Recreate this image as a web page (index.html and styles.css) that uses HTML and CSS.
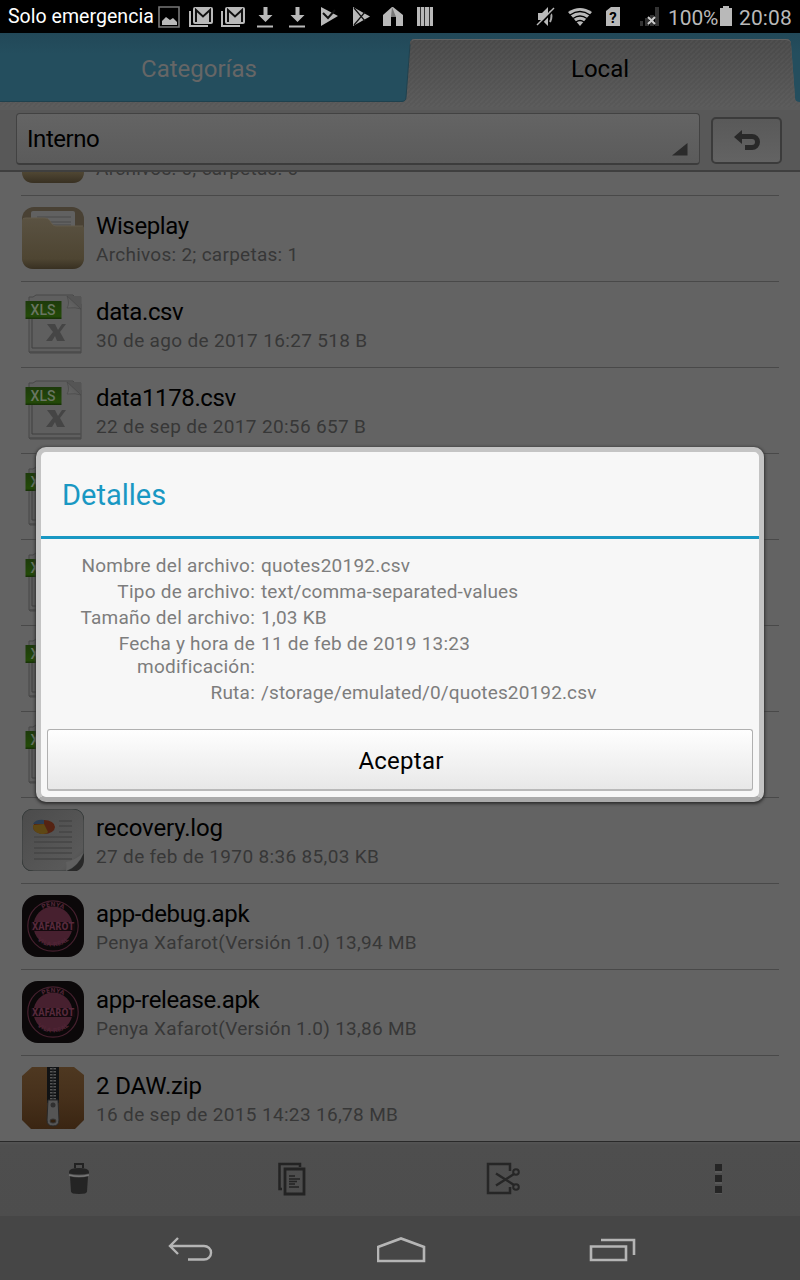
FILE: index.html
```
<!DOCTYPE html>
<html lang="es">
<head>
<meta charset="utf-8">
<title>Detalles</title>
<link rel="stylesheet" href="styles.css">
</head>
<body>
<svg class="defs" aria-hidden="true">
  <defs>
    <linearGradient id="gFolder" x1="0" y1="0" x2="0" y2="1"><stop offset="0" stop-color="#5a5242"/><stop offset=".8" stop-color="#4e4532"/><stop offset="1" stop-color="#383022"/></linearGradient>
    <linearGradient id="gGreen" x1="0" y1="0" x2="0" y2="1"><stop offset="0" stop-color="#1d3a0b"/><stop offset=".85" stop-color="#234a08"/><stop offset="1" stop-color="#152e06"/></linearGradient>
    <linearGradient id="gPage" x1="0" y1="0" x2="1" y2="1"><stop offset="0" stop-color="#4b4b4b"/><stop offset=".8" stop-color="#595959"/><stop offset="1" stop-color="#474747"/></linearGradient>
    <linearGradient id="gZip" x1="0" y1="0" x2="0" y2="1"><stop offset="0" stop-color="#4e3821"/><stop offset=".5" stop-color="#46301b"/><stop offset="1" stop-color="#3a2512"/></linearGradient>
    <linearGradient id="gFold" x1="0" y1="1" x2="1" y2="0"><stop offset="0" stop-color="#666"/><stop offset=".5" stop-color="#5c5c5c"/><stop offset=".51" stop-color="#484848"/><stop offset="1" stop-color="#606060"/></linearGradient>
    <path id="arcT" d="M15 19A20.500 20.500 0 0 1 47 19" fill="none"/>
    <path id="arcB" d="M12 41A22.500 22.500 0 0 0 50 41" fill="none"/>
  </defs>
  <symbol id="folder" viewBox="0 0 62 62">
    <rect width="62" height="62" rx="12" fill="#494134"/>
    <rect x="9" y="4" width="44" height="30" rx="2" fill="#616161"/>
    <path d="M15 10h34M15 15h34M30 18h19" stroke="#515151" stroke-width="1.5"/>
    <path d="M0 14q0-3 3-3h20q3 0 5 3l2 3q2 2 4 2h25q3 0 3 2v29q0 12-12 12H12Q0 62 0 50z" fill="url(#gFolder)"/>
    <path d="M1 12q1-1 3-1h19q3 0 5 3l2 3q2 2 4 2h27" fill="none" stroke="#625a4b"/>
  </symbol>
  <symbol id="xls" viewBox="0 0 62 62">
    <path d="M7 59V4h4l3-2h37l8 9v49H8z" fill="#5f5f5f" stroke="#484848"/>
    <path d="M10 9v46h49" fill="none" stroke="#404040"/>
    <path d="M7 59h52" stroke="#4a4a4a" stroke-width="1.5"/>
    <path d="M59 4v54" stroke="#545454"/>
    <path d="M45 3h14v13z" fill="#555"/>
    <path d="M45 3q3 8 0 12 9-1 14 1z" fill="url(#gFold)" stroke="#474747" stroke-width=".7"/>
    <path d="M25 31h8l3 6 4-6h4l-6 8 5 9h-8l-2-5-3 5h-6l7-9z" fill="#454545"/>
    <rect x="3.500" y="8" width="36" height="18" fill="url(#gGreen)"/>
  </symbol>
  <symbol id="log" viewBox="0 0 62 62">
    <rect y="1" width="62" height="62" rx="12" fill="#292929"/>
    <path d="M12 0h38q12 0 12 12v31Q56 58 44 62H12Q0 62 0 50V12Q0 0 12 0z" fill="url(#gPage)" stroke="#383d3c"/>
    <path d="M62 43Q56 58 44 62q1-5 0-9 10-2 18-10z" fill="#606060"/>
    <path d="M37 12h13M37 17h13M37 23h13M12 28h38M12 33h38M12 39h38M12 44h38M12 50h38" stroke="#454645" stroke-width="1.3"/>
    <ellipse cx="22" cy="18" rx="11" ry="7" fill="#552313"/>
    <path d="M22 15l-11 1q-1 7 8 9 6 0 7-2z" fill="#5e4714"/><path d="M11 15q3-5 11-4v4z" fill="#2b3c52"/>
  </symbol>
  <symbol id="apk" viewBox="0 0 62 62">
    <rect width="62" height="62" rx="16" fill="#0b0809"/>
    <circle cx="31" cy="31" r="25.200" fill="none" stroke="#45202e" stroke-width="1.200"/>
    <circle cx="31" cy="31" r="19.500" fill="#47202f"/>
    <rect x="9" y="27" width="44" height="9" fill="#14090e"/>
  </symbol>
  <symbol id="zip" viewBox="0 0 62 62">
    <path d="M10 0h42l10 8v45l-9 9H9l-9-9V9z" fill="url(#gZip)"/>
    <rect x="25" y="0" width="12" height="36" fill="#101214"/>
    <path d="M31 1v34" stroke="#555" stroke-width="6" stroke-dasharray="1.5 1.5"/>
    <path d="M31 0v35" stroke="#202224"/>
    <path d="M26 33h10l1 20q0 6-6 6t-6-6z" fill="#555" stroke="#292929"/>
    <circle cx="31" cy="38" r="2.5" fill="#303030"/><ellipse cx="31" cy="54" rx="3" ry="2" fill="#31200f" stroke="#353535"/>
  </symbol>
</svg>

<div class="screen">
  <header class="status">
    <span class="carrier">Solo emergencia</span>
    <svg class="status-left" width="280" height="33" viewBox="158 0 280 33" fill="#b9b9b9">
      <path d="M159 7h20v20h-20z" fill="none" stroke="#777" stroke-width="1.6"/><path d="M162 25v-4l4-4 4 3 3-2 4 4v3z"/>
      <g id="mail"><path d="M190 11v15h18" fill="none" stroke="#b9b9b9" stroke-width="2"/><rect x="193" y="7" width="20" height="17" rx="2"/><path d="M196 22V10l7 6.500 7-6.500V22" fill="none" stroke="#111" stroke-width="2"/></g>
      <use href="#mail" x="32"/>
      <g id="down"><path d="M263.500 7h4v8h5l-7 7-7-7h5zM257 25.500h16v2h-16z"/></g>
      <use href="#down" x="32"/>
      <path d="M321 7l17 9-17 10z"/><path d="M323 13l5 5 7-8" fill="none" stroke="#111" stroke-width="2"/>
      <path d="M353 7l17 9.500L353 26z"/><path d="M354 8l11 13M354 25l11-13" stroke="#111" stroke-width="1.200"/>
      <path d="M383 15l9-8h1l10 8v11h-7v-9h-5v9h-8z"/><path d="M392 7l-1 10 5 0z" fill="#777"/>
      <path d="M417 7h16v19h-16z"/><path d="M420.500 7v19M424.500 7v19M429.500 7v19" stroke="#333" stroke-width="1"/>
    </svg>
    <svg class="status-right" width="145" height="33" viewBox="525 0 145 33" fill="#b9b9b9">
      <path d="M538 13h4l6-6v19l-6-6h-4z"/><path d="M550 11q3 5 0 11" fill="none" stroke="#aaa" stroke-width="2"/><path d="M538 26.500l17-18" stroke="#000" stroke-width="2"/><path d="M537 25l17-17" stroke="#b9b9b9" stroke-width="1.500"/>
      <path d="M568 12q12-8 24 0l-12 14z"/><path d="M570 15q10-7 20 0M573 18.500q7-5 14 0M576 22q4-3 8 0" fill="none" stroke="#000" stroke-width="1.500"/>
      <path d="M606 11l5-4h9v19h-14z"/><text class="sim" x="613" y="22.500" text-anchor="middle">?</text>
      <path d="M640 21h3v5h-3zM645 18h4v8h-4zM650 15h4v11h-4zM655 7h4v19h-4z" fill="#333"/><path d="M648 17l7 7M655 17l-7 7" stroke="#ccc" stroke-width="2"/>
    </svg>
    <span class="percent">100%</span>
    <svg class="battery" width="12" height="20" viewBox="0 0 12 20"><path d="M3 0h6v2h3v18H0V2h3z" fill="#b9b9b9"/></svg>
    <span class="clock">20:08</span>
  </header>

  <nav class="tabs">
    <svg class="tab-shape" width="800" height="77" viewBox="0 0 800 77">
      <defs>
        <linearGradient id="gTab" gradientUnits="userSpaceOnUse" x1="0" y1="0" x2="0" y2="74"><stop offset="0" stop-color="#484848"/><stop offset="1" stop-color="#595959"/></linearGradient>
        <pattern id="hatch" width="5" height="5" patternUnits="userSpaceOnUse"><path d="M-1 6L6-1" stroke="#777" stroke-opacity=".14" stroke-width="1.500"/></pattern>
        <linearGradient id="gTeal" x1="0" y1="0" x2="0" y2="1"><stop offset="0" stop-color="#224858"/><stop offset=".3" stop-color="#244e5e"/><stop offset="1" stop-color="#244e5e"/></linearGradient>
      </defs>
      <rect width="800" height="77" fill="#5b5b5b"/>
      <path d="M0 0h800v69h-2q-3 0-3-4L791 11q0-5-5-5H415q-5 0-5 5l-4 54q0 4-5 4H0z" fill="url(#gTeal)"/>
      <path id="tabPath" d="M0 74v-5h401q5 0 5-4l4-54q0-5 5-5h371q5 0 5 5l4 54q0 4 5 4v5z" fill="url(#gTab)"/>
      <path d="M0 74v-5h401q5 0 5-4l4-54q0-5 5-5h371q5 0 5 5l4 54q0 4 5 4v5z" fill="url(#hatch)"/>
      <path d="M412 7.500q1-1 3-1h371q3 0 4 2" fill="none" stroke="#636363"/>
      <path d="M0 68.500h401q5 0 5-4l4-53" fill="none" stroke="#1f414e"/>
    </svg>
    <span class="tab muted">Categorías</span>
    <span class="tab">Local</span>
  </nav>

  <div class="path-bar">
    <div class="spinner"><span>Interno</span><svg width="16" height="13" viewBox="0 0 16 13"><path d="M15.500 0v12.500H0z" fill="#2b2b2b"/></svg></div>
    <div class="up"><svg width="28" height="22" viewBox="0 0 28 22"><path d="M8 0v4h10a8 8 0 0 1 0 16h-7v-5h7a3 3 0 0 0 0-6H8v5L0 7z" fill="#292929"/></svg></div>
  </div>

  <main class="list">
    <div class="row"><svg class="icon"><use href="#folder"/></svg><div><div class="name">Video</div><div class="meta">Archivos: 0; carpetas: 0</div></div></div>
    <div class="row"><svg class="icon"><use href="#folder"/></svg><div><div class="name">Wiseplay</div><div class="meta">Archivos: 2; carpetas: 1</div></div></div>
    <div class="row"><svg class="icon"><use href="#xls"/><text class="xls-label" x="21" y="21.500" text-anchor="middle">XLS</text></svg><div><div class="name">data.csv</div><div class="meta date">30 de ago de 2017 16:27 518 B</div></div></div>
    <div class="row"><svg class="icon"><use href="#xls"/><text class="xls-label" x="21" y="21.500" text-anchor="middle">XLS</text></svg><div><div class="name">data1178.csv</div><div class="meta date">22 de sep de 2017 20:56 657 B</div></div></div>
    <div class="row"><svg class="icon"><use href="#xls"/><text class="xls-label" x="21" y="21.500" text-anchor="middle">XLS</text></svg></div>
    <div class="row"><svg class="icon"><use href="#xls"/><text class="xls-label" x="21" y="21.500" text-anchor="middle">XLS</text></svg></div>
    <div class="row"><svg class="icon"><use href="#xls"/><text class="xls-label" x="21" y="21.500" text-anchor="middle">XLS</text></svg></div>
    <div class="row"><svg class="icon"><use href="#xls"/><text class="xls-label" x="21" y="21.500" text-anchor="middle">XLS</text></svg></div>
    <div class="row"><svg class="icon"><use href="#log"/></svg><div><div class="name loose">recovery.log</div><div class="meta date">27 de feb de 1970 8:36 85,03 KB</div></div></div>
    <div class="row"><svg class="icon"><use href="#apk"/><text class="apk-label" x="31" y="35" text-anchor="middle" textLength="42" lengthAdjust="spacingAndGlyphs">XAFAROT</text><text class="apk-small" text-anchor="middle"><textPath href="#arcT" startOffset="50%">PENYA</textPath></text><text class="apk-small" text-anchor="middle"><textPath href="#arcB" startOffset="50%">VILA-REAL</textPath></text></svg><div><div class="name">app-debug.apk</div><div class="meta">Penya Xafarot(Versión 1.0) 13,94 MB</div></div></div>
    <div class="row"><svg class="icon"><use href="#apk"/><text class="apk-label" x="31" y="35" text-anchor="middle" textLength="42" lengthAdjust="spacingAndGlyphs">XAFAROT</text><text class="apk-small" text-anchor="middle"><textPath href="#arcT" startOffset="50%">PENYA</textPath></text><text class="apk-small" text-anchor="middle"><textPath href="#arcB" startOffset="50%">VILA-REAL</textPath></text></svg><div><div class="name">app-release.apk</div><div class="meta">Penya Xafarot(Versión 1.0) 13,86 MB</div></div></div>
    <div class="row"><svg class="icon"><use href="#zip"/></svg><div><div class="name loose">2 DAW.zip</div><div class="meta date">16 de sep de 2015 14:23 16,78 MB</div></div></div>
  </main>

  <footer class="toolbar">
    <svg width="22" height="32" viewBox="0 0 22 32"><path d="M7 5V1h8v4" fill="none" stroke="#222" stroke-width="2"/><path d="M1 9q0-4 10-4t10 4v1.500q-10 2-20 0z" fill="#242424"/><path d="M1 12q10 2.500 20 0" fill="none" stroke="#777" stroke-width="1.500"/><path d="M2 13.500q9 2 18 0l-1 15q0 2.500-8 2.500t-8-2.500z" fill="#242424"/></svg>
    <svg class="copy" width="28" height="34" viewBox="0 0 28 34" fill="none" stroke="#232323"><path d="M4 27H1.500V2H22v3" stroke-width="2.500"/><path d="M7 7h19v25H7z" stroke-width="2.800"/><path d="M11 14h6M11 17h11M11 19.500h8M11 22h6M11 25h10" stroke-width="1.300"/></svg>
    <svg class="cut" width="34" height="34" viewBox="0 0 34 34" fill="none" stroke="#262626"><path d="M24 9V2H2v29h22v-6" stroke-width="2.500"/><path d="M10 11.500L28 23M10 23.500L28 12" stroke-width="2.400"/><circle cx="30" cy="10" r="2.800" stroke-width="2"/><circle cx="30" cy="25" r="2.800" stroke-width="2"/></svg>
    <svg width="8" height="30" viewBox="0 0 8 30"><path d="M0 8h7M0 19h7M0 30h7" stroke="#666"/><path d="M0 0h7v7H0zM0 11h7v7H0zM0 22h7v7H0z" fill="#252525"/></svg>
  </footer>

  <footer class="nav">
    <svg width="46" height="26" viewBox="0 0 46 26" fill="none" stroke="#b5b5b5" stroke-width="2.400"><path d="M10 1L2 9l8 8M2 9h34a7 6.700 0 0 1 0 13.500H20"/></svg>
    <svg width="50" height="28" viewBox="0 0 50 28" fill="none" stroke="#b5b5b5" stroke-width="2.600"><path d="M1 11L24 2.500l23 8.500v14H1z"/></svg>
    <svg width="48" height="26" viewBox="0 0 48 26" fill="none" stroke="#b5b5b5" stroke-width="2.600"><path d="M2 9.500h35v13.500H2zM12 3h33v15"/></svg>
  </footer>

  <section class="dialog" role="dialog">
    <h1>Detalles</h1>
    <div class="details">
      <div class="label">Nombre del archivo:</div><div>quotes20192.csv</div>
      <div class="label">Tipo de archivo:</div><div class="tight">text/comma-separated-values</div>
      <div class="label">Tamaño del archivo:</div><div>1,03 KB</div>
      <div class="label">Fecha y hora de<br>modificación:</div><div>11 de feb de 2019 13:23</div>
      <div class="label">Ruta:</div><div class="tight">/storage/emulated/0/quotes20192.csv</div>
    </div>
    <button class="accept">Aceptar</button>
  </section>
</div>
</body>
</html>
```
FILE: styles.css
```
* { box-sizing: border-box; }
body { margin: 0; font-family: Roboto, "Liberation Sans", sans-serif; background: #000; }
svg { display: block; flex: none; }
.defs { position: absolute; width: 0; height: 0; }
.screen { position: relative; width: 800px; height: 1280px; overflow: hidden; display: flex; flex-direction: column; background: #636363; }

.status { flex: none; height: 33px; background: #000; display: flex; align-items: center; padding-left: 8px; }
.carrier { width: 150px; flex: none; color: #fff; font-size: 19.5px; letter-spacing: .04px; white-space: nowrap; }
.status-right { margin-left: 87px; }
.percent { width: 50px; margin: 2px 0 0 -2px; color: #b9b9b9; font-size: 21px; letter-spacing: -.1px; flex: none; }
.battery { margin-left: 2px; margin-top: -2px; }
.clock { color: #b9b9b9; font-size: 21px; margin: 2px 0 0 7px; letter-spacing: .1px; }
.sim { font: bold 15px Roboto, sans-serif; fill: #000; }

.tabs { flex: none; position: relative; height: 77px; display: grid; grid-template-columns: 400px 400px; }
.tab-shape { position: absolute; left: 0; top: 0; }
.tab { position: relative; height: 72px; line-height: 72px; text-align: center; font-size: 24px; letter-spacing: 0; color: #000; }
.muted { color: #666; padding-right: 2px; }

.path-bar { flex: none; height: 62px; background: #585858; border-bottom: 2px solid #3f3f3f; padding: 3px 18px 0 16px; display: flex; justify-content: space-between; }
.spinner { width: 684px; height: 52px; border: 1px solid #424242; border-bottom: 2px solid #3c3c3c; border-radius: 4px; background: linear-gradient(#646464, #5b5b5b); display: flex; justify-content: space-between; align-items: center; padding: 0 11px 0 10px; font-size: 24px; letter-spacing: -.45px; }
.spinner svg { align-self: flex-end; margin-bottom: 7px; }
.up { width: 71px; height: 47px; margin-top: 4px; border: 2px solid #3b3b3b; border-radius: 5px; background: linear-gradient(#595959, #636363); display: flex; align-items: center; justify-content: center; padding-left: 2px; }

.list { flex: none; height: 969px; overflow: hidden; padding: 0 21px; display: flex; flex-direction: column; justify-content: flex-end; background: #636363; }
.row { flex: none; height: 86px; border-bottom: 1px solid #494949; display: flex; gap: 12px; padding: 11px 0 0 1px; }
.row:last-child { height: 85px; border-bottom: 0; }
.icon { width: 62px; height: 62px; overflow: visible; }
.name { margin-top: 5px; height: 31px; line-height: 28px; font-size: 24px; letter-spacing: -.38px; color: #000; white-space: nowrap; }
.loose { letter-spacing: -.15px; }
.meta { line-height: 24px; font-size: 19px; color: #373737; letter-spacing: .27px; white-space: nowrap; }
.date { letter-spacing: .34px; }
.xls-label { font: 500 14px Roboto, sans-serif; fill: #697561; }
.apk-label { font: bold 10px "DejaVu Sans", sans-serif; fill: #58293c; }
.apk-small { font: bold 6px "DejaVu Sans", sans-serif; fill: #4f2435; }

.toolbar { flex: none; height: 75px; border-top: 1px solid #292929; background: linear-gradient(#545454, #4e4e4e 3px, #4d4d4d); display: flex; justify-content: space-between; align-items: center; padding: 0 77px 0 68px; }
.copy { margin-left: 1px; }
.cut { margin: 0 8px 0 -7px; }
.nav { flex: none; height: 64px; background: #464646; display: flex; justify-content: space-between; align-items: center; padding: 3px 163px 0 168px; }

.dialog { position: absolute; left: 36px; top: 447px; width: 728px; height: 355px; border: 5px solid #c4c4c4; border-bottom-color: #aaa; border-radius: 10px; background: #f7f7f7; box-shadow: 0 1px 3px 1px #303030; display: flex; flex-direction: column; }
.dialog h1 { flex: none; margin: 0; height: 87px; padding-left: 21px; border-bottom: 3px solid #1998c3; line-height: 86px; font-size: 29px; font-weight: 400; color: #1998c3; }
.details { flex: none; padding-top: 15px; height: 187px; display: grid; grid-template-columns: 214px 1fr; gap: 3px 6px; align-content: start; font-size: 19px; line-height: 23px; letter-spacing: .24px; color: #7d7d7d; white-space: nowrap; }
.label { text-align: right; }
.tight { letter-spacing: .14px; }
.accept { flex: none; margin: 3px 6px 0; height: 62px; padding: 3px 0 0 2px; border: 1px solid #b0b0b0; border-bottom: 2px solid #b9b9b9; border-radius: 3px; background: linear-gradient(#fefefe, #e8e8e8); font-family: inherit; font-size: 24px; letter-spacing: .25px; color: #000; }
```
